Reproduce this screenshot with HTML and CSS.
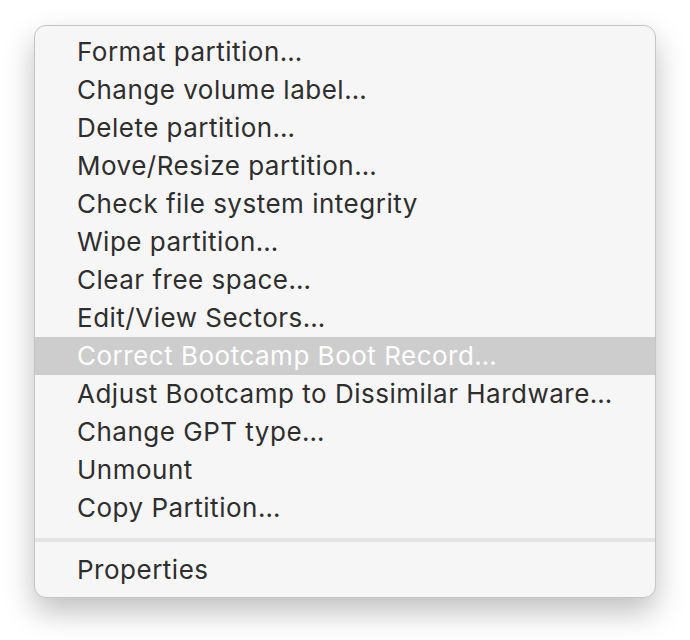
FILE: index.html
```html
<!DOCTYPE html>
<html lang="en">
<head>
    <meta charset="UTF-8">
    <title>Partition menu</title>
    <link rel="stylesheet" href="styles.css">
</head>
<body>
    <!-- Context Menu -->
    <ul class="menu">
        <li class="item">Format partition…</li>
        <li class="item">Change volume label…</li>
        <li class="item">Delete partition…</li>
        <li class="item">Move/Resize partition…</li>
        <li class="item">Check file system integrity</li>
        <li class="item">Wipe partition…</li>
        <li class="item">Clear free space…</li>
        <li class="item">Edit/View Sectors…</li>
        <li class="item active">Correct Bootcamp Boot Record…</li>
        <li class="item">Adjust Bootcamp to Dissimilar Hardware…</li>
        <li class="item">Change GPT type…</li>
        <li class="item">Unmount</li>
        <li class="item">Copy Partition…</li>
        <li class="separator"></li>
        <li class="item">Properties</li>
    </ul>
</body>
</html>
```

FILE: styles.css
```css
/* General Styles */
html, body {
    min-height: 100%;
}
body {
    margin: 0;
    padding: 25px 0 42px 34px;
    background-color: #ffffff;
    font-family: 'Inter', 'Noto Sans', sans-serif;
}

/* Menu */
.menu {
    list-style: none;
    margin: 0;
    padding: 7px 0 8px;
    width: 620px;
    background-color: #f6f6f6;
    border: 1px solid #c4c4c4;
    border-radius: 12px;
    box-shadow: 0 14px 30px rgba(0, 0, 0, 0.25);
    overflow: hidden;
}
.item {
    height: 38px;
    line-height: 38px;
    padding-left: 42px;
    font-size: 26px;
    letter-spacing: 0.5px;
    color: #2e2e2e;
    white-space: nowrap;
}
.item.active {
    background-color: #cdcdcd;
    color: #ffffff;
}
.separator {
    height: 4px;
    margin: 11px 0 9px;
    background-color: #e4e4e4;
}
```
